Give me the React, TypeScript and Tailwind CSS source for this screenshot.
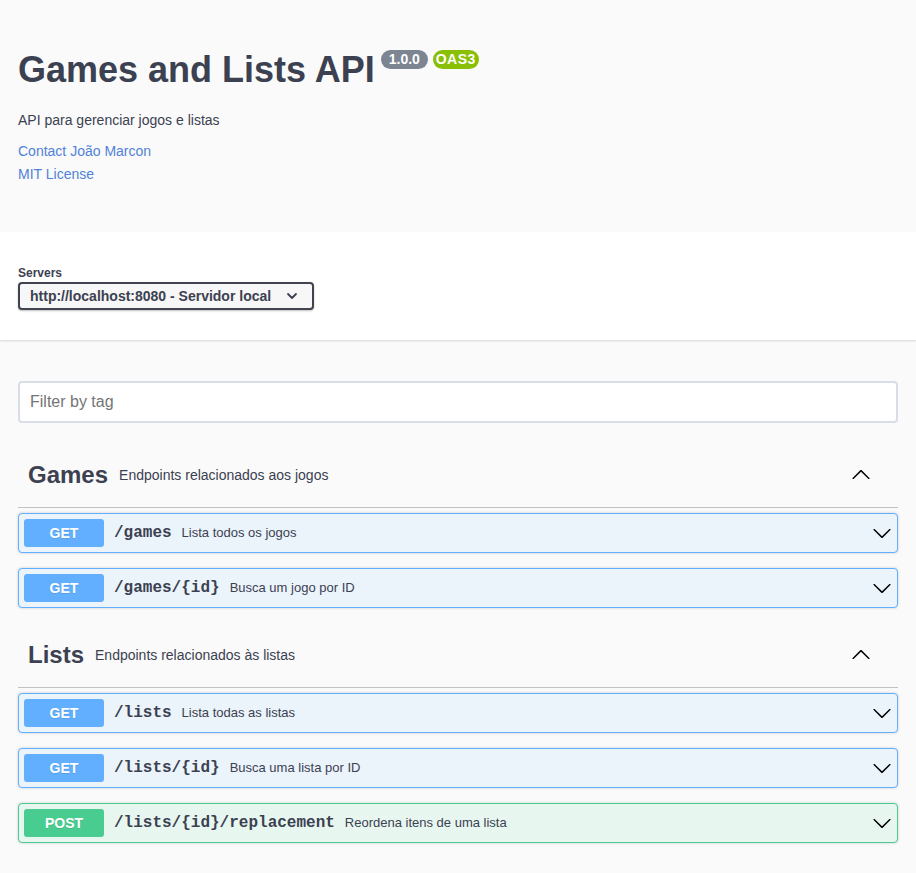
import React from "react";

type Op = { method: "GET" | "POST"; path: string; summary: string };

const sections: { name: string; description: string; ops: Op[] }[] = [
  {
    name: "Games",
    description: "Endpoints relacionados aos jogos",
    ops: [
      { method: "GET", path: "/games", summary: "Lista todos os jogos" },
      { method: "GET", path: "/games/{id}", summary: "Busca um jogo por ID" },
    ],
  },
  {
    name: "Lists",
    description: "Endpoints relacionados às listas",
    ops: [
      { method: "GET", path: "/lists", summary: "Lista todas as listas" },
      { method: "GET", path: "/lists/{id}", summary: "Busca uma lista por ID" },
      { method: "POST", path: "/lists/{id}/replacement", summary: "Reordena itens de uma lista" },
    ],
  },
];

const sans = { fontFamily: '"Liberation Sans", Arial, sans-serif' };
const mono = { fontFamily: '"Liberation Mono", "Courier New", monospace' };

function Arrow({ up = false }: { up?: boolean }) {
  return (
    <svg width="20" height="20" viewBox="0 0 20 20" className={up ? "rotate-180 shrink-0" : "shrink-0"}>
      <path
        fill="#000"
        d="M17.418 6.109c.272-.268.709-.268.979 0s.271.701 0 .969l-7.908 7.83c-.27.268-.707.268-.979 0l-7.908-7.83c-.27-.268-.27-.701 0-.969.271-.268.709-.268.979 0L10 13.25l7.418-7.141z"
      />
    </svg>
  );
}

function Operation({ op }: { op: Op }) {
  const isPost = op.method === "POST";
  return (
    <div
      className={`mb-[15px] rounded-[4px] border shadow-[0_0_3px_rgba(0,0,0,0.19)] ${
        isPost ? "border-[#49cc90] bg-[#e8f6f0]" : "border-[#61affe] bg-[#ebf3fb]"
      }`}
    >
      <div className="flex items-center p-[5px]">
        <span
          className={`flex h-[28px] w-[80px] shrink-0 items-center justify-center rounded-[3px] text-[14px] font-bold text-white [text-shadow:0_1px_0_rgba(0,0,0,0.1)] ${
            isPost ? "bg-[#49cc90]" : "bg-[#61affe]"
          }`}
        >
          {op.method}
        </span>
        <span className="px-[10px] text-[16px] font-bold text-[#3b4151]" style={mono}>
          {op.path}
        </span>
        <span className="flex-1 text-[13px] text-[#3b4151]">{op.summary}</span>
        <Arrow />
      </div>
    </div>
  );
}

export default function App() {
  return (
    <div className="min-h-[873px] bg-[#fafafa] text-[#3b4151]" style={sans}>
      {/* Info */}
      <div className="h-[232px] px-[18px] pt-[49px]">
        <div className="flex items-start">
          <h1 className="text-[36px] font-bold leading-[41px] text-[#3b4151]">Games and Lists API</h1>
          <span className="ml-[6px] mt-[1px] flex h-[19px] w-[47px] items-center justify-center rounded-full bg-[#7d8492] text-[14px] font-bold text-white">
            1.0.0
          </span>
          <span className="ml-[5px] mt-[1px] flex h-[19px] w-[46px] items-center justify-center rounded-full bg-[#89bf04] text-[14px] font-bold tracking-[0.5px] text-white">
            OAS3
          </span>
        </div>
        <p className="mt-[22px] text-[14px] leading-[16px]">API para gerenciar jogos e listas</p>
        <div className="mt-[12px] text-[14px] text-[#5082d8]">
          <div className="flex h-[23px] items-center">Contact João Marcon</div>
          <div className="flex h-[23px] items-center">MIT License</div>
        </div>
      </div>

      {/* Servers */}
      <div className="bg-white px-[18px] pb-[30px] pt-[34px] shadow-[0_1px_2px_0_rgba(0,0,0,0.15)]">
        <div className="mb-[2px] text-[12px] font-bold leading-[14px]">Servers</div>
        <div className="flex h-[28px] w-[296px] items-center justify-between rounded-[4px] border-2 border-[#41444e] bg-[#f7f7f7] pl-[10px] pr-[14px] shadow-[0_1px_2px_0_rgba(0,0,0,0.25)]">
          <span className="text-[14px] font-bold text-[#3b4151]">http://localhost:8080 - Servidor local</span>
          <svg width="12" height="12" viewBox="0 0 12 12">
            <path d="M2 4l4 4 4-4" fill="none" stroke="#3b4151" strokeWidth="1.8" strokeLinecap="round" strokeLinejoin="round" />
          </svg>
        </div>
      </div>

      {/* Operations */}
      <div className="px-[18px] pb-[15px] pt-[41px]">
        <div className="flex h-[42px] w-full items-center rounded-[4px] border-2 border-[#d8dde7] bg-white px-[10px] text-[16px] text-[#757575]">
          Filter by tag
        </div>

        <div className="mt-[20px]">
          {sections.map((s) => (
            <div key={s.name}>
              <div className="mb-[5px] flex h-[65px] items-center border-b border-[rgba(59,65,81,0.3)] pl-[10px] pr-[27px]">
                <span className="text-[24px] font-bold text-[#3b4151]">{s.name}</span>
                <span className="flex-1 px-[11px] text-[14px] text-[#3b4151]">{s.description}</span>
                <Arrow up />
              </div>
              {s.ops.map((op) => (
                <Operation key={op.path} op={op} />
              ))}
            </div>
          ))}
        </div>
      </div>
    </div>
  );
}
